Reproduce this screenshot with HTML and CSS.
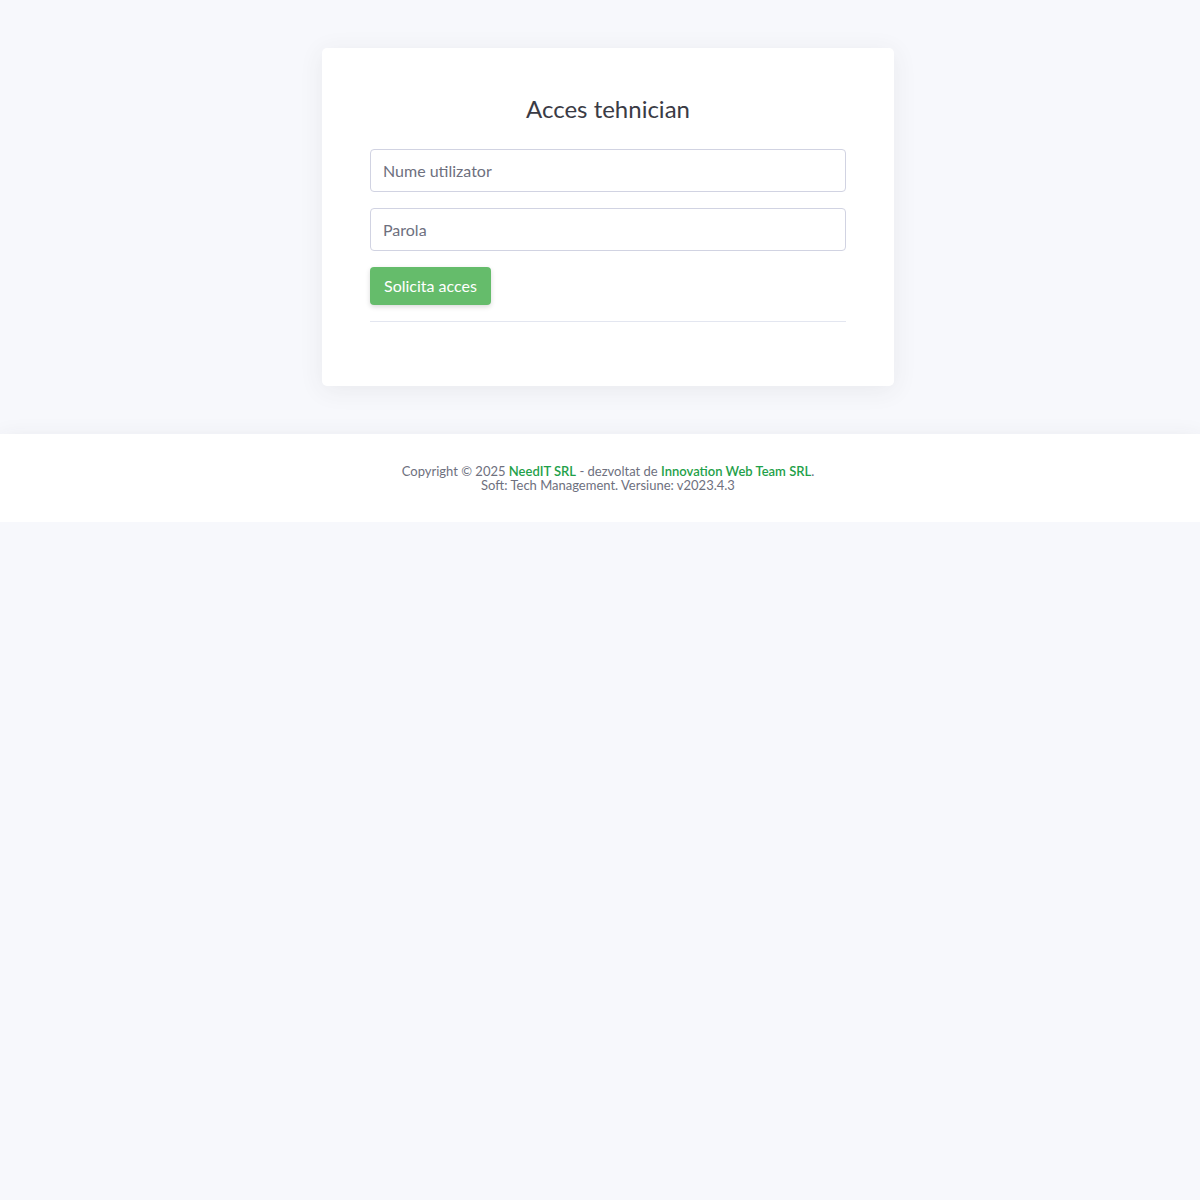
FILE: index.html
```html
<!DOCTYPE html>
<html>
<head>
    <title>Acces tehnician</title>
    <link rel="stylesheet" href="styles.css">
</head>
<body>

<div class="page">
    <div class="card">
        <h1 class="title">Acces tehnician</h1>
        <form class="login">
            <input type="text" class="field" placeholder="Nume utilizator" />
            <input type="password" class="field" placeholder="Parola" />
            <button type="button" class="btn-green">Solicita acces</button>
        </form>
        <hr class="line" />
    </div>
</div>

<footer class="footer">
    <div class="copy">
        Copyright &copy; 2025 <a href="#">NeedIT SRL</a> - dezvoltat de <a href="#">Innovation Web Team SRL</a>.<br />
        Soft: Tech Management. Versiune: v2023.4.3
    </div>
</footer>

</body>
</html>
```

FILE: styles.css
```css
body{
    margin: 0;
    background: #f7f8fc;
    font-family: 'Lato', 'Open Sans', sans-serif;
    color: #6e707e;
}
/*container*/
.page{
    padding: 48px 0 48px 16px;
    display: flex;
    justify-content: center;
}
.card{
    width: 572px;
    box-sizing: border-box;
    background: #fff;
    border-radius: 5px;
    padding: 48px 48px 64px;
    box-shadow: 0 4px 24px rgba(58,59,69,0.08);
}
.title{
    margin: 0 0 25px;
    text-align: center;
    font-weight: 400;
    font-size: 24px;
    line-height: 26px;
    padding-bottom: 2px;
    color: #3a3b45;
}
.login{
    display: flex;
    flex-direction: column;
    align-items: flex-start;
    gap: 16px;
}
.field{
    width: 100%;
    height: 43px;
    box-sizing: border-box;
    border: 1px solid #d1d3e2;
    border-radius: 4px;
    padding: 0 12px;
    font-family: inherit;
    font-size: 16px;
    color: #6e707e;
}
.field::placeholder{
    color: #6e707e;
}
.btn-green{
    height: 38px;
    padding: 0 14px 2px 14px;
    border: none;
    border-radius: 4px;
    background: #65bc6b;
    color: #fff;
    font-family: inherit;
    font-size: 16px;
    box-shadow: 0 2px 5px rgba(0,0,0,0.15);
}
.line{
    margin: 16px 0 0;
    border: 0;
    border-top: 1px solid #e3e6f0;
}
/*footer*/
.footer{
    background: #fff;
    padding: 30px 0 30px 16px;
    box-shadow: 0 8px 24px rgba(58,59,69,0.12);
}
.copy{
    text-align: center;
    font-size: 13px;
    line-height: 14px;
    color: #6e707e;
}
.copy a{
    color: #1fa14a;
    text-decoration: none;
    font-weight: 600;
}
```
